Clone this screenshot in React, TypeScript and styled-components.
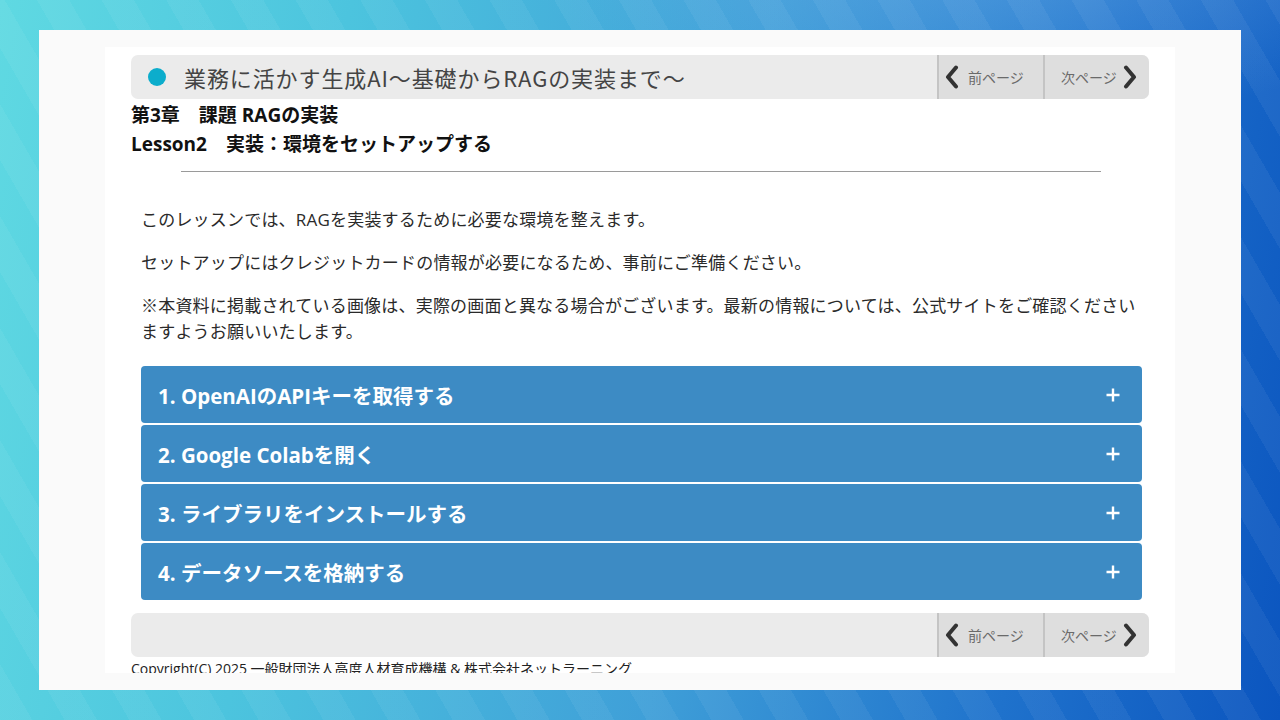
import React from "react"
import styled, { createGlobalStyle } from "styled-components"

const GlobalStyle = createGlobalStyle`
    html, body {
        margin: 0;
        padding: 0;
    }
    body {
        width: 1280px;
        height: 720px;
        overflow: hidden;
        font-family: "Open Sans", "Noto Sans CJK JP", sans-serif;
    }
`

const Backdrop = styled.div`
    width: 1280px;
    height: 720px;
    box-sizing: border-box;
    padding: 30px 39px;
    background:
        repeating-linear-gradient(
            60deg,
            rgba(255, 255, 255, 0.05) 0px,
            rgba(255, 255, 255, 0.05) 28px,
            rgba(255, 255, 255, 0) 28px,
            rgba(255, 255, 255, 0) 56px
        ),
        radial-gradient(ellipse 700px 260px at 1000px -60px, rgba(120, 180, 235, 0.45), rgba(120, 180, 235, 0) 70%),
        linear-gradient(100deg, #5fd9e2 0%, #4cc4de 25%, #3f9fd8 55%, #1f72cc 80%, #0b55bf 100%);
`

const Frame = styled.div`
    height: 660px;
    background: #fafafa;
    display: flex;
    justify-content: center;
`

const Page = styled.div`
    width: 1070px;
    margin-top: 17px;
    height: 626px;
    background: #ffffff;
    box-sizing: border-box;
    padding: 8px 26px 0;
    overflow: hidden;
    display: flex;
    flex-direction: column;
`

const Bar = styled.div`
    height: 44px;
    background: #ebebeb;
    border-radius: 7px;
    display: flex;
    align-items: stretch;
    flex-shrink: 0;
`

const TitleArea = styled.div`
    flex: 1;
    display: flex;
    align-items: center;
    padding-left: 17px;
    gap: 18px;
`

const Dot = styled.span`
    width: 18px;
    height: 18px;
    border-radius: 50%;
    background: #0cadcc;
`

const CourseTitle = styled.span`
    font-family: "Noto Sans CJK JP", sans-serif;
    font-size: 22px;
    font-weight: 400;
    color: #444;
    letter-spacing: 0.9px;
`

const NavButton = styled.div<{ $last?: boolean }>`
    width: 106px;
    background: #dedede;
    border-left: 2px solid #c4c4c4;
    box-sizing: border-box;
    display: flex;
    align-items: center;
    padding-left: ${(p) => (p.$last ? "16px" : "5px")};
    gap: ${(p) => (p.$last ? "5px" : "8px")};
    color: #6a6a6a;
    font-size: 14px;
    border-radius: ${(p) => (p.$last ? "0 7px 7px 0" : "0")};
`

const Heading = styled.div`
    font-size: 19px;
    font-weight: 700;
    color: #111;
    line-height: 29px;
    white-space: pre;
`

const FirstHeading = styled(Heading)`
    margin-top: 2px;
`

const Rule = styled.hr`
    margin: 12px 48px 0 50px;
    border: none;
    border-top: 1px solid #9a9a9a;
    height: 0;
`

const Body = styled.div`
    padding: 0 7px 0 10px;
    margin-top: 35px;
`

const Para = styled.p`
    margin: 0 0 17px;
    font-size: 17px;
    line-height: 26px;
    color: #2a2a2a;
    letter-spacing: 0.2px;
`

const Accordion = styled.div`
    margin-top: 21px;
    display: flex;
    flex-direction: column;
    gap: 2px;
`

const Item = styled.div`
    height: 57px;
    background: #3d8bc4;
    border-radius: 4px;
    display: flex;
    align-items: center;
    justify-content: space-between;
    padding: 0 22px 0 17px;
    color: #ffffff;
    font-size: 20.5px;
    font-weight: 700;
`

const FooterBar = styled(Bar)`
    margin-top: 13px;
`

const Copyright = styled.div`
    font-size: 14px;
    color: #222;
    margin-top: 1px;
    white-space: nowrap;
`

function Chevron({ dir }: { dir: "left" | "right" }) {
    const d = dir === "left" ? "M12 2.5 L4 12 L12 21.5" : "M4 2.5 L12 12 L4 21.5"
    return (
        <svg width="16" height="24" viewBox="0 0 16 24">
            <path d={d} fill="none" stroke="#333" strokeWidth="4" strokeLinecap="round" strokeLinejoin="round" />
        </svg>
    )
}

function PlusIcon() {
    return (
        <svg width="14" height="14" viewBox="0 0 14 14">
            <path d="M7 0.5 V13.5 M0.5 7 H13.5" stroke="#fff" strokeWidth="2.4" />
        </svg>
    )
}

function PageNav() {
    return (
        <>
            <NavButton>
                <Chevron dir="left" />
                <span>前ページ</span>
            </NavButton>
            <NavButton $last>
                <span>次ページ</span>
                <Chevron dir="right" />
            </NavButton>
        </>
    )
}

const steps = [
    "1. OpenAIのAPIキーを取得する",
    "2. Google Colabを開く",
    "3. ライブラリをインストールする",
    "4. データソースを格納する",
]

export default function App() {
    return (
        <Backdrop>
            <GlobalStyle />
            <Frame>
                <Page>
                    <Bar>
                        <TitleArea>
                            <Dot />
                            <CourseTitle>業務に活かす生成AI〜基礎からRAGの実装まで〜</CourseTitle>
                        </TitleArea>
                        <PageNav />
                    </Bar>
                    <FirstHeading>第3章　課題 RAGの実装</FirstHeading>
                    <Heading>Lesson2　実装：環境をセットアップする</Heading>
                    <Rule />
                    <Body>
                        <Para>このレッスンでは、RAGを実装するために必要な環境を整えます。</Para>
                        <Para>セットアップにはクレジットカードの情報が必要になるため、事前にご準備ください。</Para>
                        <Para>
                            ※本資料に掲載されている画像は、実際の画面と異なる場合がございます。最新の情報については、公式サイトをご確認ください
                            <br />
                            ますようお願いいたします。
                        </Para>
                        <Accordion>
                            {steps.map((s) => (
                                <Item key={s}>
                                    <span>{s}</span>
                                    <PlusIcon />
                                </Item>
                            ))}
                        </Accordion>
                    </Body>
                    <FooterBar>
                        <TitleArea />
                        <PageNav />
                    </FooterBar>
                    <Copyright>Copyright(C) 2025 一般財団法人高度人材育成機構 &amp; 株式会社ネットラーニング</Copyright>
                </Page>
            </Frame>
        </Backdrop>
    )
}
